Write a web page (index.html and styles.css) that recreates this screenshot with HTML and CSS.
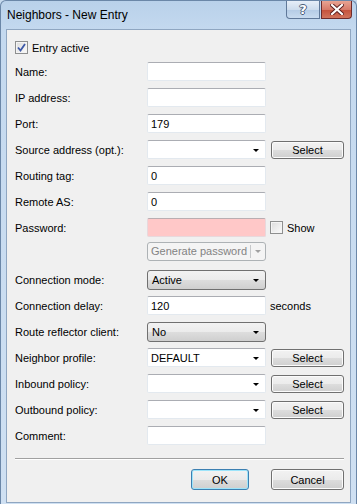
FILE: index.html
```html
<!DOCTYPE html>
<html lang="en">
<head>
    <meta charset="UTF-8">
    <title>Neighbors - New Entry</title>
    <link rel="stylesheet" href="styles.css">
</head>
<body>
    <div class="window">
        <div class="titlebar">
            <span class="title">Neighbors - New Entry</span>
            <div class="caption-buttons">
                <button class="cap help">?</button>
                <button class="cap close">
                    <svg width="14" height="11" viewBox="0 0 14 11"><path d="M2 1 L12 10 M12 1 L2 10" stroke="#5a1d1d" stroke-width="4" stroke-linecap="square"/><path d="M2 1 L12 10 M12 1 L2 10" stroke="#fff" stroke-width="2.2" stroke-linecap="square"/></svg>
                </button>
            </div>
        </div>
        <div class="client">
            <div class="check-row">
                <span class="checkbox">
                    <svg width="9" height="9" viewBox="0 0 9 9"><path d="M1 4.5 L3.5 7.5 L8 1" fill="none" stroke="#3c58a8" stroke-width="1.8"/></svg>
                </span>
                <span>Entry active</span>
            </div>
            <div class="form">
                <div class="row"><span class="label">Name:</span><div class="field"></div></div>
                <div class="row"><span class="label">IP address:</span><div class="field"></div></div>
                <div class="row"><span class="label">Port:</span><div class="field">179</div></div>
                <div class="row"><span class="label">Source address (opt.):</span><div class="field combo"><span class="arrow"></span></div><button class="btn select">Select</button></div>
                <div class="row"><span class="label">Routing tag:</span><div class="field">0</div></div>
                <div class="row"><span class="label">Remote AS:</span><div class="field">0</div></div>
                <div class="row"><span class="label">Password:</span><div class="field pink"></div><div class="show"><span class="checkbox"></span><span>Show</span></div></div>
                <div class="row gen-row"><span class="label"></span><div class="split disabled"><span class="split-text">Generate password</span><span class="split-arrow"><span class="arrow grey"></span></span></div></div>
                <div class="row mode-row"><span class="label">Connection mode:</span><div class="dropdown">Active<span class="arrow"></span></div></div>
                <div class="row"><span class="label">Connection delay:</span><div class="field">120</div><span class="unit">seconds</span></div>
                <div class="row"><span class="label">Route reflector client:</span><div class="dropdown">No<span class="arrow"></span></div></div>
                <div class="row"><span class="label">Neighbor profile:</span><div class="field combo">DEFAULT<span class="arrow"></span></div><button class="btn select">Select</button></div>
                <div class="row"><span class="label">Inbound policy:</span><div class="field combo"><span class="arrow"></span></div><button class="btn select">Select</button></div>
                <div class="row"><span class="label">Outbound policy:</span><div class="field combo"><span class="arrow"></span></div><button class="btn select">Select</button></div>
                <div class="row"><span class="label">Comment:</span><div class="field"></div></div>
            </div>
            <div class="separator"></div>
            <div class="actions">
                <button class="btn default">OK</button>
                <button class="btn">Cancel</button>
            </div>
        </div>
    </div>
</body>
</html>
```
FILE: styles.css
```css
body {
    margin: 0;
    background: #c6daee;
    font-family: "Liberation Sans", Arial, sans-serif;
    font-size: 11px;
    color: #000;
}

.window {
    width: 357px;
    height: 504px;
    box-sizing: border-box;
    display: flex;
    flex-direction: column;
    background: linear-gradient(#b9d1ea, #c4d9ef 30px, #cfe0f2);
    border: 1px solid #6b87a8;
    border-bottom: none;
    border-radius: 6px 6px 0 0;
    padding: 0 5px 1px 5px;
}

.titlebar {
    height: 28px;
    display: flex;
    align-items: flex-start;
    justify-content: space-between;
}

.title {
    font-size: 12px;
    margin-top: 7px;
    margin-left: 1px;
}

.caption-buttons {
    display: flex;
    gap: 1px;
    margin-right: -1px;
}

.cap {
    height: 18px;
    border: 1px solid #5f7899;
    border-top: none;
    padding: 0;
    display: flex;
    align-items: center;
    justify-content: center;
}

.help {
    width: 34px;
    border-radius: 0 0 0 4px;
    background: linear-gradient(#e6eef8, #cddced 50%, #b4cbe5 51%, #c8dbef);
    color: #fff;
    font-weight: bold;
    font-size: 13px;
    font-family: "DejaVu Sans", sans-serif;
    text-shadow: 1px 0 0 #4a5d78, -1px 0 0 #4a5d78, 0 1px 0 #4a5d78, 0 -1px 0 #4a5d78;
}

.close {
    width: 31px;
    border-color: #6e2b2b;
    border-radius: 0 0 4px 0;
    background: linear-gradient(#e8a493, #d77b6a 50%, #c4503a 51%, #d0735c);
}

.client {
    flex: 1;
    background: #f0f0f0;
    border: 1px solid #8fa6c1;
    padding: 11px 7px 0 8px;
}

.check-row {
    display: flex;
    align-items: center;
    gap: 4px;
    height: 13px;
}

.checkbox {
    width: 11px;
    height: 11px;
    border: 1px solid #8e8f8f;
    background: linear-gradient(135deg, #dcdcdc, #fbfbfb);
    box-shadow: inset 0 0 0 1px #f4f4f4;
    display: flex;
    align-items: center;
    justify-content: center;
}

.form {
    display: flex;
    flex-direction: column;
    gap: 7px;
    margin-top: 8px;
}

.row {
    display: grid;
    grid-template-columns: 132px 119px 78px;
    height: 19px;
    align-items: center;
}

.gen-row {
    margin-top: -2px;
}

.mode-row {
    margin-top: 2px;
}

.field {
    height: 19px;
    box-sizing: border-box;
    background: #fff;
    border: 1px solid #e3e9ef;
    border-top-color: #abadb3;
    border-radius: 2px;
    padding: 0 3px;
    display: flex;
    align-items: center;
    position: relative;
}

.field.pink {
    background: #ffc8c8;
    border-color: #e8d8dc;
    border-top-color: #b9adb1;
}

.arrow {
    position: absolute;
    right: 6px;
    top: 8px;
    width: 0;
    height: 0;
    border-left: 3px solid transparent;
    border-right: 3px solid transparent;
    border-top: 3px solid #000;
}

.arrow.grey {
    border-top-color: #a0a0a0;
    position: static;
}

.dropdown {
    height: 20px;
    box-sizing: border-box;
    border: 1px solid #707070;
    border-radius: 3px;
    background: linear-gradient(#f2f2f2, #ebebeb 50%, #dddddd 51%, #cfcfcf);
    padding: 0 4px;
    display: flex;
    align-items: center;
    position: relative;
}

.btn {
    font-family: inherit;
    font-size: 11px;
    color: #000;
    height: 19px;
    border: 1px solid #707070;
    border-radius: 3px;
    background: linear-gradient(#f2f2f2, #ebebeb 50%, #dddddd 51%, #cfcfcf);
    box-shadow: inset 0 0 0 1px #fbfbfb;
    padding: 0;
}

.select {
    width: 73px;
    height: 18px;
    margin-left: 5px;
}

.show {
    display: flex;
    align-items: center;
    gap: 4px;
    margin-left: 4px;
}

.unit {
    margin-left: 4px;
}

.split {
    height: 19px;
    box-sizing: border-box;
    border: 1px solid #adb2b5;
    border-radius: 3px;
    background: #f4f4f4;
    display: flex;
    align-items: center;
    color: #838383;
}

.split-text {
    flex: 1;
    text-align: center;
    border-right: 1px solid #c6c8ca;
    line-height: 13px;
}

.split-arrow {
    width: 14px;
    display: flex;
    justify-content: center;
}

.separator {
    height: 1px;
    background: #a0a0a0;
    border-bottom: 1px solid #fff;
    margin: 13px 0 0 0;
    width: 329px;
}

.actions {
    display: flex;
    justify-content: flex-end;
    gap: 22px;
    margin-top: 9px;
    width: 329px;
}

.actions .btn {
    width: 73px;
    height: 21px;
}

.actions .default {
    width: 58px;
    border-color: #3c7fb1;
    box-shadow: inset 0 0 0 1px #9de4fa;
}
```
